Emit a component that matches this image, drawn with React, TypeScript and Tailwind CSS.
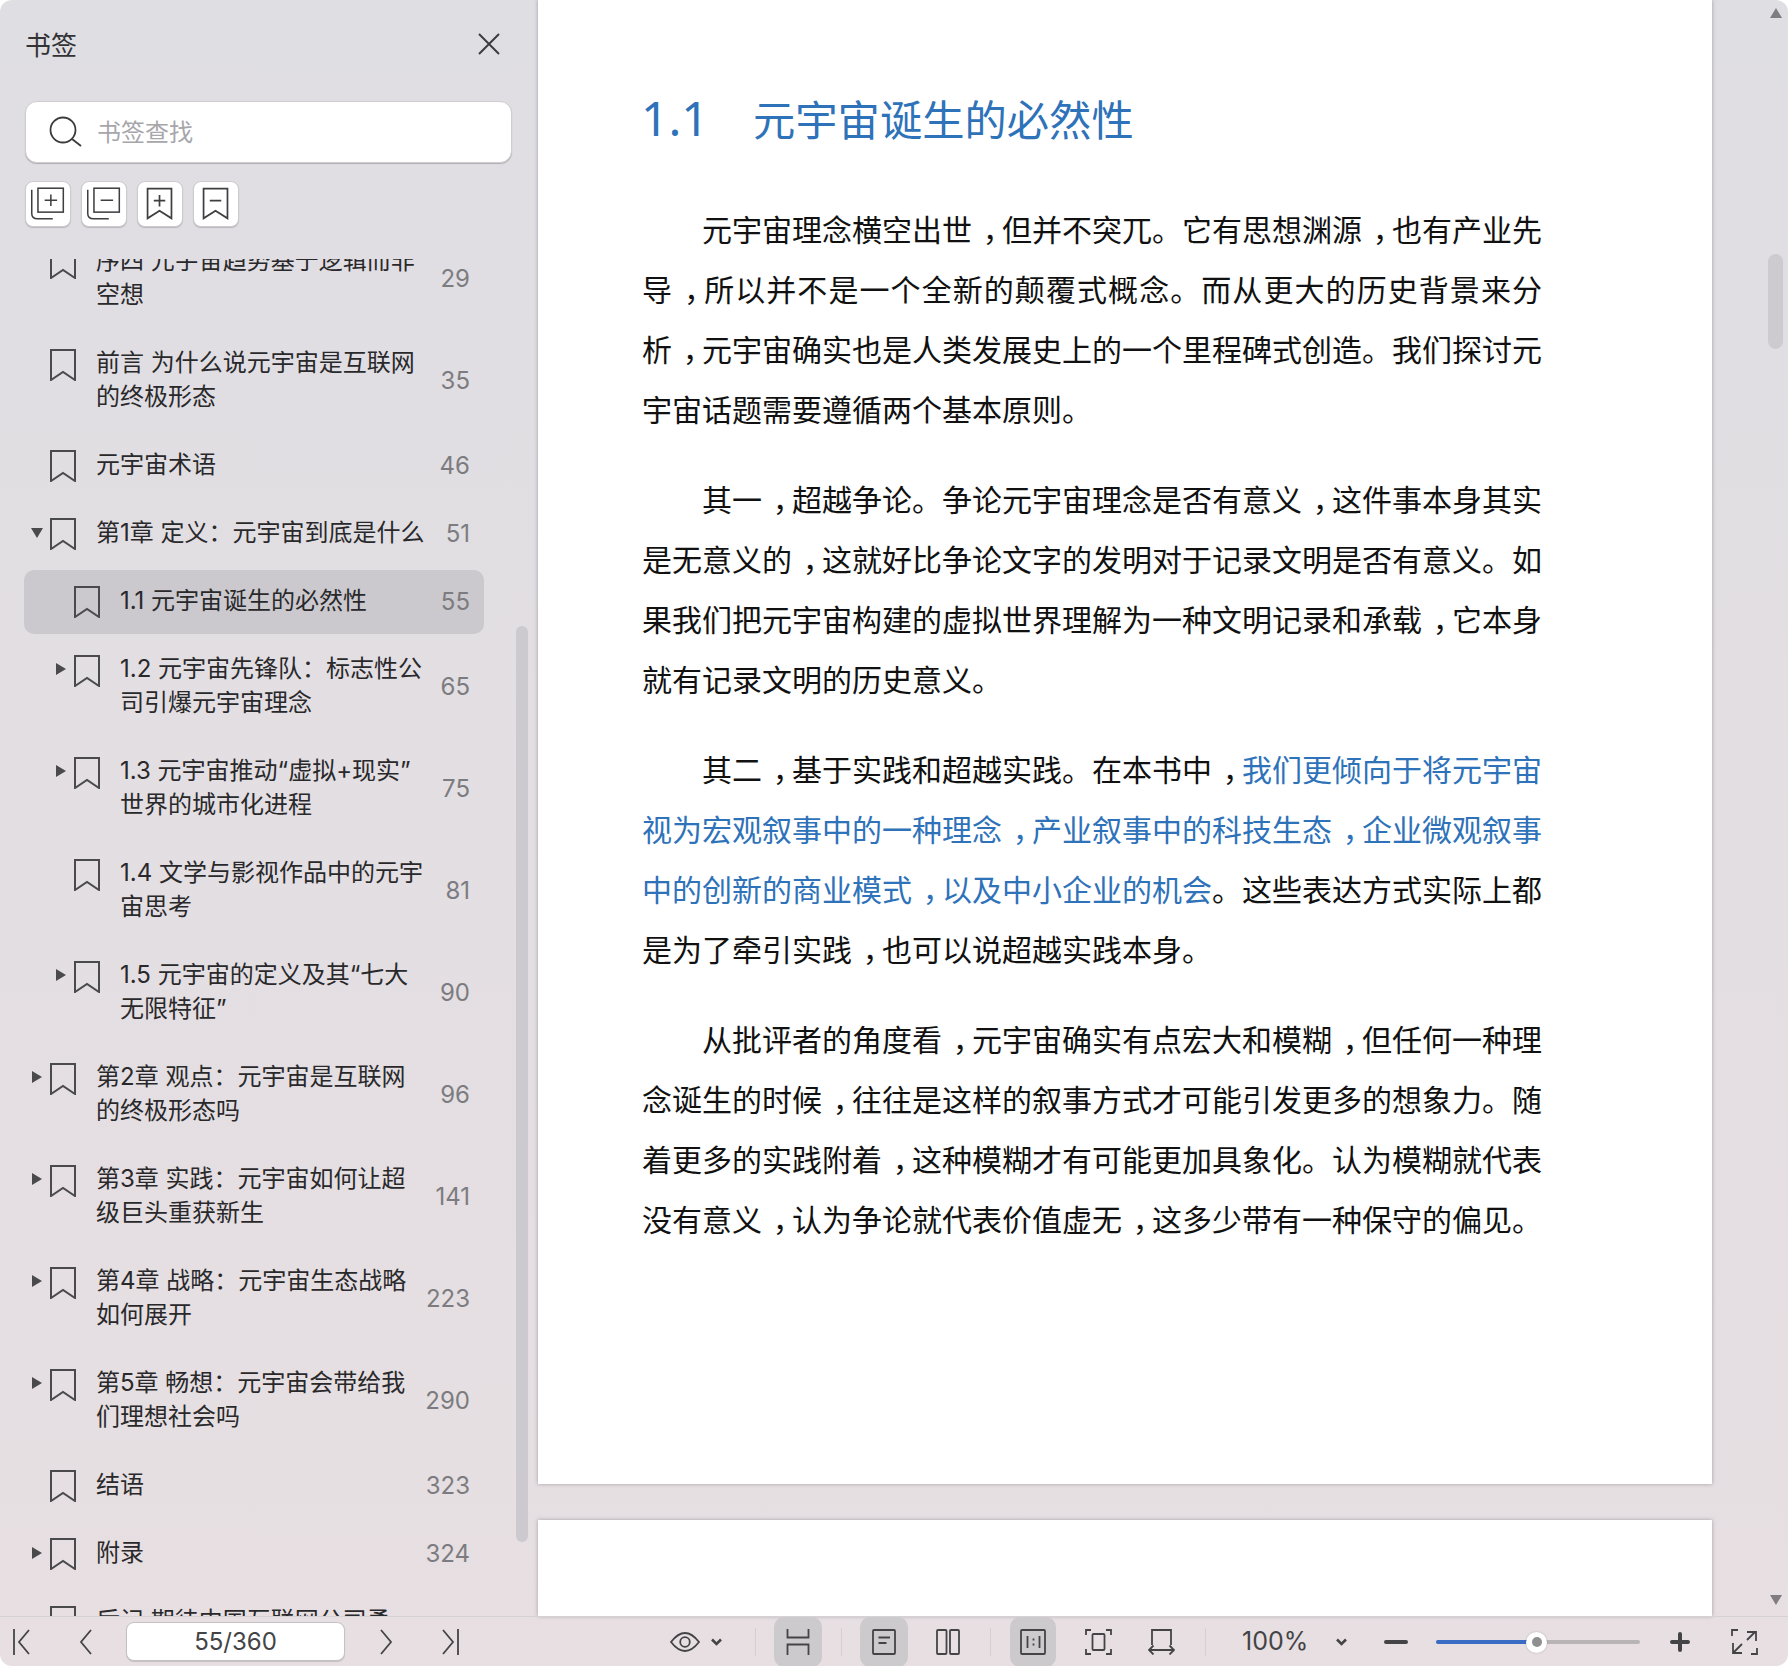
import React from "react";

const CJK = "font-['Noto_Sans_CJK_SC','Noto_Sans',sans-serif]";
const LATIN = "font-['Inter','Noto_Sans_CJK_SC',sans-serif]";

type Row = {
  lines: string[];
  page?: number;
  level: 0 | 1;
  arrow?: "down" | "right";
  selected?: boolean;
};

const rows: Row[] = [
  { lines: ["序四 元宇宙趋势基于逻辑而非", "空想"], page: 29, level: 0 },
  { lines: ["前言 为什么说元宇宙是互联网", "的终极形态"], page: 35, level: 0 },
  { lines: ["元宇宙术语"], page: 46, level: 0 },
  { lines: ["第1章 定义：元宇宙到底是什么"], page: 51, level: 0, arrow: "down" },
  { lines: ["1.1 元宇宙诞生的必然性"], page: 55, level: 1, selected: true },
  { lines: ["1.2 元宇宙先锋队：标志性公", "司引爆元宇宙理念"], page: 65, level: 1, arrow: "right" },
  { lines: ["1.3 元宇宙推动“虚拟+现实”", "世界的城市化进程"], page: 75, level: 1, arrow: "right" },
  { lines: ["1.4 文学与影视作品中的元宇", "宙思考"], page: 81, level: 1 },
  { lines: ["1.5 元宇宙的定义及其“七大", "无限特征”"], page: 90, level: 1, arrow: "right" },
  { lines: ["第2章 观点：元宇宙是互联网", "的终极形态吗"], page: 96, level: 0, arrow: "right" },
  { lines: ["第3章 实践：元宇宙如何让超", "级巨头重获新生"], page: 141, level: 0, arrow: "right" },
  { lines: ["第4章 战略：元宇宙生态战略", "如何展开"], page: 223, level: 0, arrow: "right" },
  { lines: ["第5章 畅想：元宇宙会带给我", "们理想社会吗"], page: 290, level: 0, arrow: "right" },
  { lines: ["结语"], page: 323, level: 0 },
  { lines: ["附录"], page: 324, level: 0, arrow: "right" },
  { lines: ["后记 期待中国互联网公司勇"], level: 0 },
];

function Bookmark() {
  return (
    <svg width="26" height="32" viewBox="0 0 26 32" fill="none" className="block">
      <path d="M1 1H25V31L13 23L1 31Z" stroke="#4a4a4c" strokeWidth="2" strokeLinejoin="miter" />
    </svg>
  );
}

function Arrow({ dir }: { dir?: "down" | "right" }) {
  if (!dir) return <span className="w-[12px] mr-[7px] shrink-0" />;
  return (
    <span className="w-[12px] mr-[7px] shrink-0 h-[32px] flex items-center justify-center">
      {dir === "down" ? (
        <svg width="12" height="10" viewBox="0 0 12 10">
          <path d="M0 0H12L6 10Z" fill="#4a4a4c" />
        </svg>
      ) : (
        <svg width="10" height="12" viewBox="0 0 10 12">
          <path d="M0 0L10 6L0 12Z" fill="#4a4a4c" />
        </svg>
      )}
    </span>
  );
}

function BookRow({ row }: { row: Row }) {
  return (
    <div
      className={`flex items-center rounded-[10px] py-[15px] pr-[14px] ${
        row.level === 1 ? "pl-[31px]" : "pl-[7px]"
      } ${row.selected ? "bg-[#cbc9ce]" : ""}`}
    >
      <div className="flex items-start flex-1 min-w-0">
        <Arrow dir={row.arrow} />
        <div className={`shrink-0 ${row.lines.length > 1 ? "mt-[2px]" : "mt-[1px]"}`}>
          <Bookmark />
        </div>
        <div
          className={`ml-[20px] -translate-y-[1px] text-[24px] leading-[34px] text-[#29292b] whitespace-nowrap ${LATIN}`}
        >
          {row.lines.map((l) => (
            <div key={l}>{l}</div>
          ))}
        </div>
      </div>
      {row.page !== undefined && (
        <div className={`text-[24px] leading-[34px] text-[#7c7c80] ${LATIN}`}>{row.page}</div>
      )}
    </div>
  );
}

function SmallBtn({ children }: { children: React.ReactNode }) {
  return (
    <div className="w-[46px] h-[46px] rounded-[8px] bg-white border border-[#cdcbd0] shadow-[0_1px_1px_rgba(0,0,0,0.18)] flex items-center justify-center">
      {children}
    </div>
  );
}

function StackIcon({ plus }: { plus: boolean }) {
  return (
    <svg width="46" height="46" viewBox="0 0 46 46" fill="none" stroke="#3f3f41" strokeWidth="1.6">
      <rect x="12.5" y="6.5" width="26.5" height="25" />
      <path d="M6 8V33Q6 38.5 12 38.5H28" />
      <path d="M19.5 19H32.5" />
      {plus && <path d="M26 13V25" />}
    </svg>
  );
}

function MarkIcon({ plus }: { plus: boolean }) {
  return (
    <svg width="46" height="46" viewBox="0 0 46 46" fill="none" stroke="#3f3f41" strokeWidth="1.8">
      <path d="M10 7H35V38L22.5 30L10 38Z" />
      <path d="M16.5 19.5H28.5" />
      {plus && <path d="M22.5 13.5V25.5" />}
    </svg>
  );
}

function Sidebar() {
  return (
    <aside className="w-[538px] shrink-0 flex flex-col min-h-0">
      <div className="flex items-center justify-between pl-[25px] pr-[38px] pt-[17px] h-[71px]">
        <span className="text-[26px] leading-[34px] text-[#333335]">书签</span>
        <svg width="22" height="22" viewBox="0 0 22 22" fill="none" stroke="#3c3c3e" strokeWidth="2">
          <path d="M1 1L21 21M21 1L1 21" />
        </svg>
      </div>
      <div className="mt-[30px] ml-[25px] w-[487px] h-[62px] rounded-[12px] bg-white border border-[#cfcdd2] shadow-[0_1px_1px_rgba(0,0,0,0.22)] flex items-center">
        <svg width="34" height="32" viewBox="0 0 34 32" fill="none" stroke="#3c3c3e" strokeWidth="1.8" className="ml-[23px]">
          <circle cx="14" cy="14" r="12.5" />
          <path d="M23 23L32 30" />
        </svg>
        <span className="ml-[14px] text-[24px] leading-[34px] text-[#a7a6aa] -translate-y-[1px]">书签查找</span>
      </div>
      <div className="mt-[18px] ml-[25px] flex gap-[10px]">
        <SmallBtn><StackIcon plus /></SmallBtn>
        <SmallBtn><StackIcon plus={false} /></SmallBtn>
        <SmallBtn><MarkIcon plus /></SmallBtn>
        <SmallBtn><MarkIcon plus={false} /></SmallBtn>
      </div>
      <div className="mt-[32px] flex-1 min-h-0 overflow-hidden relative">
        <div className="ml-[24px] w-[460px] -mt-[29px] flex flex-col gap-[4px]">
          {rows.map((r) => (
            <BookRow key={r.lines[0]} row={r} />
          ))}
        </div>
        <div className="absolute left-[516px] top-[367px] w-[12px] h-[916px] rounded-full bg-[#cdcacf]" />
      </div>
    </aside>
  );
}

function commas(text: string) {
  const parts = text.split("，");
  return parts.map((p, i) => (
    <React.Fragment key={i}>
      {p}
      {i < parts.length - 1 && <span className="pl-[0.36em] tracking-[-0.36em]">，</span>}
    </React.Fragment>
  ));
}

function Line({ indent, last, children }: { indent?: boolean; last?: boolean; children: React.ReactNode }) {
  return (
    <div className={`${indent ? "pl-[60px]" : ""} ${last ? "text-left" : "text-justify [text-align-last:justify]"}`}>
      {children}
    </div>
  );
}

function Para({ lines }: { lines: string[] }) {
  return (
    <div className="mb-[30px]">
      {lines.map((l, i) => (
        <Line key={i} indent={i === 0} last={i === lines.length - 1 && l.length < 28}>
          {commas(l)}
        </Line>
      ))}
    </div>
  );
}

function Document() {
  const blue = "text-[#2e72b9]";
  return (
    <div className="w-[1174px] shrink-0 flex flex-col min-h-0">
      <div className="h-[1484px] bg-white shadow-[0_0_4px_rgba(60,55,70,0.4)] pl-[104px] pt-[88px] shrink-0">
        <div className={`flex items-center h-[60px] mb-[50px] ${blue} text-[42.3px]`}>
          <span className="font-['Noto_Sans',sans-serif] text-[48px] -ml-[1px] w-[112px]">1.1</span>
          <span>元宇宙诞生的必然性</span>
        </div>
        <div className="w-[900px] text-[30px] leading-[60px] text-[#111111]">
          <Para
            lines={[
              "元宇宙理念横空出世，但并不突兀。它有思想渊源，也有产业先",
              "导，所以并不是一个全新的颠覆式概念。而从更大的历史背景来分",
              "析，元宇宙确实也是人类发展史上的一个里程碑式创造。我们探讨元",
              "宇宙话题需要遵循两个基本原则。",
            ]}
          />
          <Para
            lines={[
              "其一，超越争论。争论元宇宙理念是否有意义，这件事本身其实",
              "是无意义的，这就好比争论文字的发明对于记录文明是否有意义。如",
              "果我们把元宇宙构建的虚拟世界理解为一种文明记录和承载，它本身",
              "就有记录文明的历史意义。",
            ]}
          />
          <div className="mb-[30px]">
            <Line indent>
              {commas("其二，基于实践和超越实践。在本书中，")}
              <span className={blue}>我们更倾向于将元宇宙</span>
            </Line>
            <Line>
              <span className={blue}>{commas("视为宏观叙事中的一种理念，产业叙事中的科技生态，企业微观叙事")}</span>
            </Line>
            <Line>
              <span className={blue}>{commas("中的创新的商业模式，以及中小企业的机会")}</span>
              。这些表达方式实际上都
            </Line>
            <Line last>{commas("是为了牵引实践，也可以说超越实践本身。")}</Line>
          </div>
          <Para
            lines={[
              "从批评者的角度看，元宇宙确实有点宏大和模糊，但任何一种理",
              "念诞生的时候，往往是这样的叙事方式才可能引发更多的想象力。随",
              "着更多的实践附着，这种模糊才有可能更加具象化。认为模糊就代表",
              "没有意义，认为争论就代表价值虚无，这多少带有一种保守的偏见。",
            ]}
          />
        </div>
      </div>
      <div className="mt-[36px] flex-1 bg-white shadow-[0_0_4px_rgba(60,55,70,0.4)]" />
    </div>
  );
}

const S = "#444446";

function Nav({ w, d }: { w: number; d: string }) {
  return (
    <svg width={w} height="26" viewBox={`0 0 ${w} 26`} fill="none" stroke={S} strokeWidth="1.8">
      <path d={d} />
    </svg>
  );
}

function Sep({ className }: { className: string }) {
  return <div className={`w-[1px] h-[28px] bg-[#d3cfd2] shrink-0 ${className}`} />;
}

function Active({ w, ml, children }: { w: string; ml: string; children: React.ReactNode }) {
  return (
    <div className={`${w} ${ml} h-[50px] rounded-[10px] bg-[#cdcacd] flex items-center justify-center shrink-0`}>
      {children}
    </div>
  );
}

function Chevron({ className }: { className: string }) {
  return (
    <svg width="11" height="8" viewBox="0 0 11 8" fill="none" stroke={S} strokeWidth="2.6" className={`shrink-0 ${className}`}>
      <path d="M1 1.5L5.5 6L10 1.5" />
    </svg>
  );
}

function Toolbar() {
  return (
    <div className="h-[50px] shrink-0 border-t border-[#d6d1d4] flex items-center relative">
      <div className="ml-[13px] shrink-0"><Nav w={17} d="M1 0V26M16 1L6 13L16 25" /></div>
      <div className="ml-[49px] shrink-0"><Nav w={13} d="M12 1L2 13L12 25" /></div>
      <div className={`ml-[34px] w-[219px] h-[39px] rounded-[8px] bg-white border border-[#c4c1c4] shadow-[0_1px_1px_rgba(0,0,0,0.15)] flex items-center justify-center text-[24px] text-[#444446] shrink-0 ${LATIN}`}>
        55/360
      </div>
      <div className="ml-[35px] shrink-0"><Nav w={13} d="M1 1L11 13L1 25" /></div>
      <div className="ml-[49px] shrink-0"><Nav w={17} d="M16 0V26M1 1L11 13L1 25" /></div>
      <svg width="30" height="20" viewBox="0 0 30 20" fill="none" stroke={S} strokeWidth="1.8" className="ml-[211px] shrink-0">
        <path d="M1 10Q8 1 15 1T29 10Q22 19 15 19T1 10Z" />
        <circle cx="15" cy="10" r="4.8" />
      </svg>
      <Chevron className="ml-[11px]" />
      <Sep className="ml-[33px]" />
      <Active w="w-[48px]" ml="ml-[18px]">
        <svg width="24" height="26" viewBox="0 0 24 26" fill="none" stroke={S} strokeWidth="1.8">
          <path d="M1.5 0V8.5H22.5V0M1.5 26V15.5H22.5V26" />
        </svg>
      </Active>
      <Sep className="ml-[19px]" />
      <Active w="w-[48px]" ml="ml-[18px]">
        <svg width="24" height="26" viewBox="0 0 24 26" fill="none" stroke={S} strokeWidth="1.8">
          <rect x="1" y="1" width="22" height="24" rx="1" />
          <path d="M6.5 8.5H18M6.5 14H14.5" />
        </svg>
      </Active>
      <svg width="24" height="26" viewBox="0 0 24 26" fill="none" stroke={S} strokeWidth="1.8" className="ml-[28px] shrink-0">
        <rect x="1" y="1" width="9.5" height="24" rx="1" />
        <rect x="14" y="1" width="9" height="24" rx="1" />
      </svg>
      <Sep className="ml-[30px]" />
      <Active w="w-[46px]" ml="ml-[19px]">
        <svg width="26" height="26" viewBox="0 0 26 26" fill="none" stroke={S} strokeWidth="1.8">
          <rect x="1" y="1" width="24" height="24" rx="1" />
          <path d="M7.5 7V19M19.5 7V19M13.5 9.5V11.5M13.5 14.5V16.5" />
        </svg>
      </Active>
      <svg width="27" height="26" viewBox="0 0 27 26" fill="none" stroke={S} strokeWidth="1.8" className="ml-[29px] shrink-0">
        <path d="M6 1H1V6M21 1H26V6M6 25H1V20M21 25H26V20" />
        <rect x="7.5" y="5" width="12" height="16" rx="1" />
      </svg>
      <svg width="27" height="26" viewBox="0 0 27 26" fill="none" stroke={S} strokeWidth="1.8" className="ml-[36px] shrink-0">
        <path d="M4 16V1H23V16" />
        <path d="M1 21H26M5.5 16.5L1 21L5.5 25.5M21.5 16.5L26 21L21.5 25.5" />
      </svg>
      <Sep className="ml-[30px]" />
      <span className={`ml-[36px] w-[67px] text-[25px] text-[#444446] shrink-0 ${LATIN}`}>100%</span>
      <Chevron className="ml-[27px]" />
      <div className="ml-[37px] w-[24px] h-[4px] rounded-full bg-[#444446] shrink-0" />
      <div className="ml-[28px] w-[204px] h-[4px] rounded-full bg-[#b8b4b6] relative shrink-0">
        <div className="w-[101px] h-[4px] rounded-full bg-[#3a6cc6]" />
        <div className="absolute left-[90px] -top-[8px] w-[21px] h-[21px] rounded-full bg-white shadow-[0_0_2px_rgba(0,0,0,0.25)] flex items-center justify-center">
          <div className="w-[10px] h-[10px] rounded-full bg-[#8f8f90]" />
        </div>
      </div>
      <svg width="20" height="20" viewBox="0 0 20 20" fill="none" stroke="#444446" strokeWidth="4" strokeLinecap="round" className="ml-[30px] shrink-0">
        <path d="M2 10H18M10 2V18" />
      </svg>
      <svg width="27" height="26" viewBox="0 0 27 26" fill="none" stroke={S} strokeWidth="1.8" className="ml-[41px] shrink-0">
        <path d="M7 1H1V7M20 25H26V19" />
        <path d="M16 3H25V12M24.5 2.5L16 11M2 14V24H11M2.5 23.5L11 15" />
      </svg>
    </div>
  );
}

export default function App() {
  return (
    <div className={`w-[1788px] h-[1666px] rounded-[12px] overflow-hidden bg-linear-to-b from-[#dfdee3] to-[#e7dfe2] flex flex-col ${CJK}`}>
      <div className="flex-1 min-h-0 flex relative">
        <Sidebar />
        <Document />
        <svg width="12" height="10" viewBox="0 0 12 10" className="absolute left-[1770px] top-[8px]">
          <path d="M6 0L12 10H0Z" fill="#7f7d82" />
        </svg>
        <div className="absolute left-[1768px] top-[254px] w-[15px] h-[95px] rounded-full bg-[#cdcbd0]" />
        <svg width="12" height="10" viewBox="0 0 12 10" className="absolute left-[1770px] top-[1595px]">
          <path d="M0 0H12L6 10Z" fill="#7f7d82" />
        </svg>
      </div>
      <Toolbar />
    </div>
  );
}
